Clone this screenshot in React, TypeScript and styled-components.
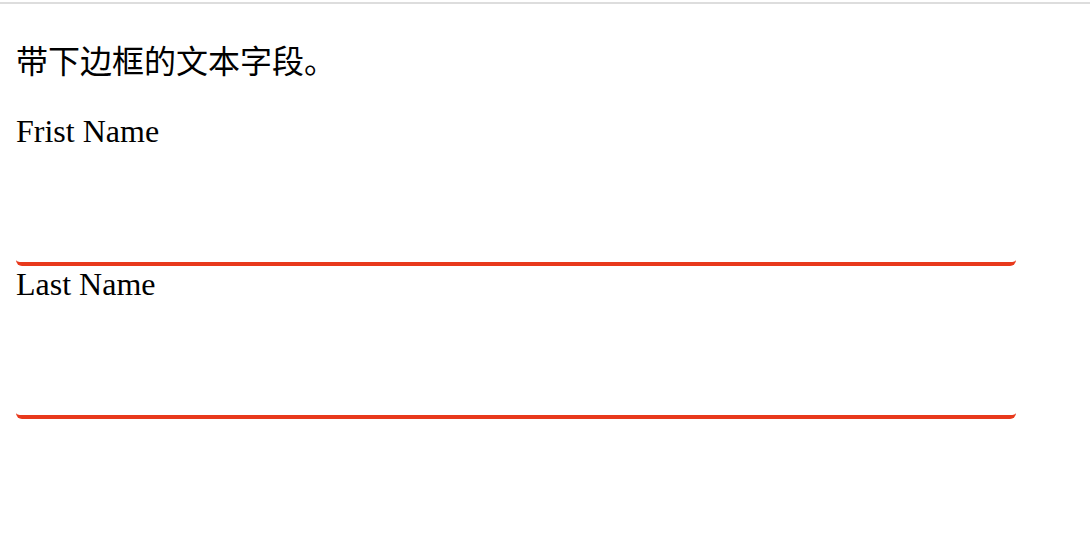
import React from "react";
import styled, { createGlobalStyle } from "styled-components";

const GlobalStyle = createGlobalStyle`
  html, body {
    margin: 0;
    padding: 0;
    background: #ffffff;
  }
  body {
    font-family: "Liberation Serif", "Times New Roman", serif;
    color: #000000;
  }
`;

const TopRule = styled.div`
  height: 2px;
  margin-top: 2px;
  background: #dddddd;
`;

const Page = styled.main`
  padding: 0 16px;
`;

const Heading = styled.p`
  margin: 35px 0 34px;
  font-family: "Noto Sans CJK SC", "Noto Sans", sans-serif;
  font-size: 32px;
  line-height: 40px;
  font-weight: 400;
`;

const Form = styled.form`
  display: flex;
  flex-direction: column;
  width: 1000px;
`;

const Label = styled.label`
  display: block;
  font-family: "Liberation Serif", "Times New Roman", serif;
  font-size: 32px;
  line-height: 37px;
`;

const UnderlineInput = styled.input`
  display: block;
  box-sizing: border-box;
  width: 1000px;
  height: 116px;
  margin: 0;
  padding: 0 8px;
  border: none;
  border-bottom: 4px solid #e8391c;
  border-radius: 6px;
  outline: none;
  background: transparent;
  font-family: "Liberation Serif", "Times New Roman", serif;
  font-size: 32px;
`;

export default function App() {
  return (
    <>
      <GlobalStyle />
      <TopRule />
      <Page>
        <Heading>带下边框的文本字段。</Heading>
        <Form onSubmit={(e) => e.preventDefault()}>
          <Label htmlFor="fname">Frist Name</Label>
          <UnderlineInput id="fname" type="text" />
          <Label htmlFor="lname">Last Name</Label>
          <UnderlineInput id="lname" type="text" />
        </Form>
      </Page>
    </>
  );
}
